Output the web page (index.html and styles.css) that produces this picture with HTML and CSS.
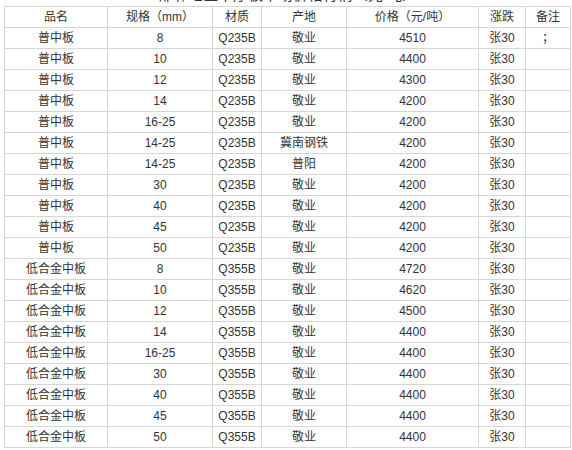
FILE: index.html
```html
<!DOCTYPE html>
<html lang="zh">
<head>
<meta charset="utf-8">
<link rel="stylesheet" href="styles.css">
</head>
<body>
<div class="page">
  <div class="title"><span>邯郸地区中厚板市场价格行情（元/吨）</span></div>
  <table class="price">
    <colgroup>
      <col class="c1"><col class="c2"><col class="c3"><col class="c4"><col class="c5"><col class="c6"><col class="c7">
    </colgroup>
    <tr><td>品名</td><td>规格（mm）</td><td>材质</td><td>产地</td><td>价格（元/吨）</td><td>涨跌</td><td>备注</td></tr>
    <tr><td>普中板</td><td>8</td><td>Q235B</td><td>敬业</td><td>4510</td><td>张30</td><td>；</td></tr>
    <tr><td>普中板</td><td>10</td><td>Q235B</td><td>敬业</td><td>4400</td><td>张30</td><td></td></tr>
    <tr><td>普中板</td><td>12</td><td>Q235B</td><td>敬业</td><td>4300</td><td>张30</td><td></td></tr>
    <tr><td>普中板</td><td>14</td><td>Q235B</td><td>敬业</td><td>4200</td><td>张30</td><td></td></tr>
    <tr><td>普中板</td><td>16-25</td><td>Q235B</td><td>敬业</td><td>4200</td><td>张30</td><td></td></tr>
    <tr><td>普中板</td><td>14-25</td><td>Q235B</td><td>冀南钢铁</td><td>4200</td><td>张30</td><td></td></tr>
    <tr><td>普中板</td><td>14-25</td><td>Q235B</td><td>普阳</td><td>4200</td><td>张30</td><td></td></tr>
    <tr><td>普中板</td><td>30</td><td>Q235B</td><td>敬业</td><td>4200</td><td>张30</td><td></td></tr>
    <tr><td>普中板</td><td>40</td><td>Q235B</td><td>敬业</td><td>4200</td><td>张30</td><td></td></tr>
    <tr><td>普中板</td><td>45</td><td>Q235B</td><td>敬业</td><td>4200</td><td>张30</td><td></td></tr>
    <tr><td>普中板</td><td>50</td><td>Q235B</td><td>敬业</td><td>4200</td><td>张30</td><td></td></tr>
    <tr><td>低合金中板</td><td>8</td><td>Q355B</td><td>敬业</td><td>4720</td><td>张30</td><td></td></tr>
    <tr><td>低合金中板</td><td>10</td><td>Q355B</td><td>敬业</td><td>4620</td><td>张30</td><td></td></tr>
    <tr><td>低合金中板</td><td>12</td><td>Q355B</td><td>敬业</td><td>4500</td><td>张30</td><td></td></tr>
    <tr><td>低合金中板</td><td>14</td><td>Q355B</td><td>敬业</td><td>4400</td><td>张30</td><td></td></tr>
    <tr><td>低合金中板</td><td>16-25</td><td>Q355B</td><td>敬业</td><td>4400</td><td>张30</td><td></td></tr>
    <tr><td>低合金中板</td><td>30</td><td>Q355B</td><td>敬业</td><td>4400</td><td>张30</td><td></td></tr>
    <tr><td>低合金中板</td><td>40</td><td>Q355B</td><td>敬业</td><td>4400</td><td>张30</td><td></td></tr>
    <tr><td>低合金中板</td><td>45</td><td>Q355B</td><td>敬业</td><td>4400</td><td>张30</td><td></td></tr>
    <tr><td>低合金中板</td><td>50</td><td>Q355B</td><td>敬业</td><td>4400</td><td>张30</td><td></td></tr>
  </table>
</div>
</body>
</html>
```

FILE: styles.css
```css
html, body {
  margin: 0;
  padding: 0;
  background: #ffffff;
}
.page {
  padding-left: 4px;
  font-family: "Liberation Sans", "Noto Sans CJK SC", sans-serif;
  font-size: 12px;
  color: #333333;
}
.title {
  width: 567px;
  height: 6px;
  overflow: hidden;
  display: flex;
  flex-direction: column;
  justify-content: flex-end;
  align-items: center;
}
.title span {
  display: block;
  flex: none;
  font-size: 15px;
  line-height: 16px;
  font-weight: normal;
  color: #333333;
  margin-bottom: 3px;
}
.price {
  width: 567px;
  table-layout: fixed;
  border-collapse: collapse;
}
.price td {
  border: 1px solid #d6d6d6;
  padding: 0;
  height: 20px;
  line-height: 20px;
  text-align: center;
  white-space: nowrap;
  overflow: hidden;
}
.c1 { width: 103px; }
.c2 { width: 105px; }
.c3 { width: 49px; }
.c4 { width: 85px; }
.c5 { width: 132px; }
.c6 { width: 47px; }
.c7 { width: 45px; }
```
